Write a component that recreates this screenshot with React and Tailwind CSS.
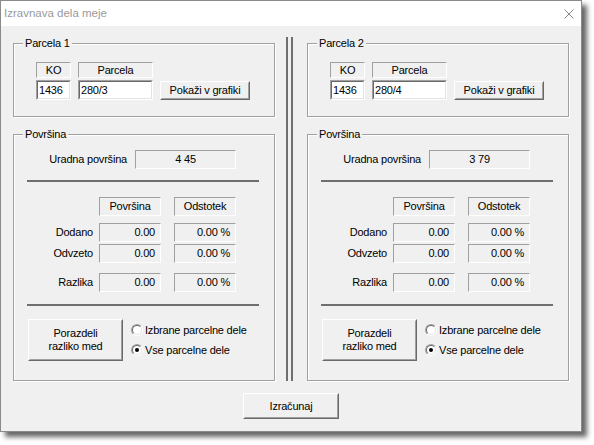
import React from "react"

const font = "font-['Liberation_Sans',Arial,sans-serif] text-[11px] tracking-[-0.2px] text-black"

function Group({ title, className, children }) {
  return (
    <div className={`relative border border-[#a0a0a0] shadow-[inset_1px_1px_0_#fff,1px_1px_0_#fff] ${className}`}>
      <span className="absolute -top-[8px] left-[9px] px-[2px] bg-[#f0f0f0] leading-[14px]">{title}</span>
      {children}
    </div>
  )
}

function Static({ className, children }) {
  return (
    <div className={`flex items-center border border-t-[#a0a0a0] border-l-[#a0a0a0] border-b-white border-r-white leading-none ${className}`}>
      {children}
    </div>
  )
}

function Field({ className, value }) {
  return (
    <div className={`border border-t-[#a0a0a0] border-l-[#a0a0a0] border-b-white border-r-white ${className}`}>
      <div className="h-full flex items-center pl-[1px] bg-white border border-t-[#696969] border-l-[#696969] border-b-[#e3e3e3] border-r-[#e3e3e3] leading-none">
        {value}
      </div>
    </div>
  )
}

function Button({ className, children }) {
  return (
    <div className={`border border-t-white border-l-white border-b-[#696969] border-r-[#696969] ${className}`}>
      <div className="h-full flex items-center justify-center text-center bg-[#f0f0f0] border border-t-[#f0f0f0] border-l-[#f0f0f0] border-b-[#a0a0a0] border-r-[#a0a0a0] leading-[13px]">
        {children}
      </div>
    </div>
  )
}

function Radio({ checked, label }) {
  return (
    <div className="flex items-center h-[20px]">
      <div className="w-[12px] h-[12px] rounded-full border border-t-[#a0a0a0] border-l-[#a0a0a0] border-b-white border-r-white">
        <div className="w-full h-full rounded-full bg-white border border-t-[#696969] border-l-[#696969] border-b-[#e3e3e3] border-r-[#e3e3e3] flex items-center justify-center">
          {checked && <div className="w-[4px] h-[4px] rounded-full bg-black" />}
        </div>
      </div>
      <span className="ml-[2px]">{label}</span>
    </div>
  )
}

function Row({ label, gap, value, percent }) {
  return (
    <div className={`flex ${gap}`}>
      <div className="w-[85px] h-[19px] flex items-center justify-end pr-[6px]">{label}</div>
      <Static className="w-[62px] h-[19px] justify-end pr-[5px]">{value}</Static>
      <Static className="w-[62px] h-[19px] ml-[13px] justify-end pr-[5px]">{percent}</Static>
    </div>
  )
}

function Panel({ n, parcela, area }) {
  return (
    <div className="w-[262px] pt-[6px] flex flex-col">
      <Group title={`Parcela ${n}`} className="h-[74px]">
        <div className="flex pt-[18px] pl-[22px] gap-[7px]">
          <div className="flex flex-col gap-[2px] w-[35px]">
            <Static className="h-[16px] justify-center">KO</Static>
            <Field className="h-[20px]" value="1436" />
          </div>
          <div className="flex flex-col gap-[2px] w-[75px]">
            <Static className="h-[16px] justify-center">Parcela</Static>
            <Field className="h-[20px]" value={parcela} />
          </div>
          <Button className="w-[90px] h-[19px] mt-[19px]">Pokaži v grafiki</Button>
        </div>
      </Group>

      <Group title="Površina" className="h-[247px] mt-[17px]">
        <div className="flex flex-col">
          <div className="flex mt-[15px]">
            <div className="w-[121px] h-[19px] flex items-center justify-end pr-[8px]">Uradna površina</div>
            <Static className="w-[101px] h-[19px] justify-center">{area}</Static>
          </div>
          <div className="mt-[11px] ml-[13px] w-[232px] h-[2px] bg-[#6f6f6f]" />
          <div className="flex mt-[15px] pl-[85px]">
            <Static className="w-[62px] h-[19px] justify-center">Površina</Static>
            <Static className="w-[62px] h-[19px] ml-[13px] justify-center">Odstotek</Static>
          </div>
          <Row label="Dodano" gap="mt-[7px]" value="0.00" percent="0.00 %" />
          <Row label="Odvzeto" gap="mt-[2px]" value="0.00" percent="0.00 %" />
          <Row label="Razlika" gap="mt-[10px]" value="0.00" percent="0.00 %" />
          <div className="mt-[12px] ml-[13px] w-[232px] h-[2px] bg-[#6f6f6f]" />
          <div className="flex items-center mt-[13px] ml-[14px]">
            <Button className="w-[95px] h-[42px]">
              Porazdeli
              <br />
              razliko med
            </Button>
            <div className="flex flex-col ml-[8px]">
              <Radio label="Izbrane parcelne dele" />
              <Radio checked label="Vse parcelne dele" />
            </div>
          </div>
        </div>
      </Group>
    </div>
  )
}

export default function App() {
  return (
    <div className={`w-[594px] h-[445px] bg-white ${font}`}>
      <div className="w-[582px] h-[432px] border border-[#8a8a8a] bg-[#f0f0f0] flex flex-col shadow-[5px_5px_5px_rgba(0,0,0,0.6)]">
        <div className="h-[25px] bg-white flex items-center justify-between pl-[3px] pr-[7px]">
          <span className="text-[#9a9a9a] text-[11.5px] tracking-normal">Izravnava dela meje</span>
          <svg width="10" height="10" viewBox="0 0 10 10">
            <path d="M0.5 0.5 L9.5 9.5 M9.5 0.5 L0.5 9.5" stroke="#8a8a8a" strokeWidth="1" fill="none" />
          </svg>
        </div>
        <div className="flex pt-[11px] pl-[12px]">
          <Panel n={1} parcela="280/3" area="4 45" />
          <div className="flex gap-[3px] ml-[11px] mr-[14px]">
            <div className="w-[2px] bg-[#6f6f6f]" />
            <div className="w-[2px] bg-[#6f6f6f]" />
          </div>
          <Panel n={2} parcela="280/4" area="3 79" />
        </div>
        <Button className="w-[96px] h-[26px] mt-[12px] mx-auto">Izračunaj</Button>
      </div>
    </div>
  )
}
